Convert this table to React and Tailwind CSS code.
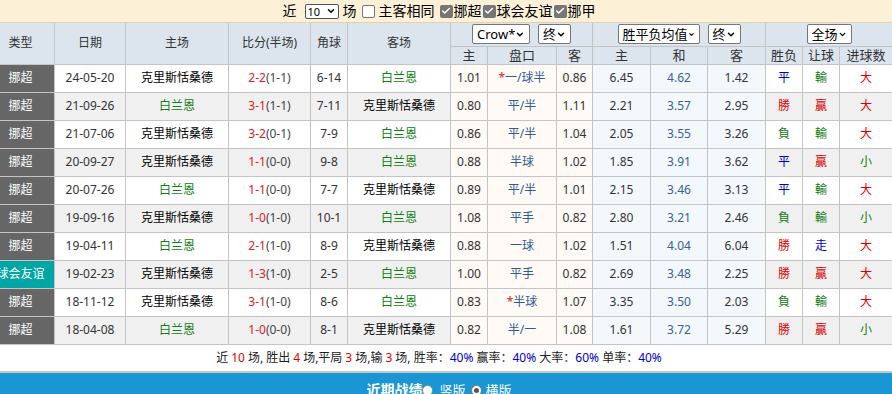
import { ChevronDown, Check } from 'lucide-react'

const ROWS = [
  ['挪超', '24-05-20', 'K', '2-2', '(1-1)', '6-14', '1.01', '*', '一/球半', '0.86', '6.45', '4.62', '1.42', '平', '輸', '大'],
  ['挪超', '21-09-26', 'B', '3-1', '(1-1)', '7-11', '0.80', '', '平/半', '1.11', '2.21', '3.57', '2.95', '勝', '贏', '大'],
  ['挪超', '21-07-06', 'K', '3-2', '(0-1)', '7-9', '0.86', '', '平/半', '1.04', '2.05', '3.55', '3.26', '負', '輸', '大'],
  ['挪超', '20-09-27', 'K', '1-1', '(0-0)', '9-8', '0.88', '', '半球', '1.02', '1.85', '3.91', '3.62', '平', '贏', '小'],
  ['挪超', '20-07-26', 'B', '1-1', '(0-0)', '7-7', '0.89', '', '平/半', '1.01', '2.15', '3.46', '3.13', '平', '輸', '大'],
  ['挪超', '19-09-16', 'K', '1-0', '(1-0)', '10-1', '1.08', '', '平手', '0.82', '2.80', '3.21', '2.46', '負', '輸', '小'],
  ['挪超', '19-04-11', 'B', '2-1', '(1-0)', '8-9', '0.88', '', '一球', '1.02', '1.51', '4.04', '6.04', '勝', '走', '大'],
  ['球会友谊', '19-02-23', 'K', '1-3', '(1-0)', '2-5', '1.00', '', '平手', '0.82', '2.69', '3.48', '2.25', '勝', '贏', '大'],
  ['挪超', '18-11-12', 'K', '3-1', '(1-0)', '8-6', '0.83', '*', '半球', '1.07', '3.35', '3.50', '2.03', '負', '輸', '大'],
  ['挪超', '18-04-08', 'B', '1-0', '(0-0)', '8-1', '0.82', '', '半/一', '1.08', '1.61', '3.72', '5.29', '勝', '贏', '小'],
]

const WIDTHS = [68, 71, 103, 82, 37, 103, 37, 69, 36, 58, 57, 58, 37, 37, 53]

const RESULT_COLOR = {
  平: 'text-[#0000cc]',
  走: 'text-[#0000cc]',
  勝: 'text-[#dd0000]',
  贏: 'text-[#dd0000]',
  大: 'text-[#dd0000]',
  負: 'text-[#108010]',
  輸: 'text-[#108010]',
  小: 'text-[#108010]',
}

function Box({ checked }) {
  return checked ? (
    <span className="inline-flex items-center justify-center w-[13px] h-[13px] rounded-[2px] bg-[#767676] text-white">
      <Check size={10} strokeWidth={3.5} />
    </span>
  ) : (
    <span className="inline-block w-[13px] h-[13px] rounded-[2px] border border-[#767676] bg-white" />
  )
}

function Sel({ label, w }) {
  return (
    <span className={`inline-flex items-center justify-between h-[20px] px-[4px] rounded-[2px] border border-[#767676] bg-white text-[13px] text-black ${w}`}>
      <span>{label}</span>
      <ChevronDown size={11} strokeWidth={3.5} />
    </span>
  )
}

function Team({ b }) {
  return b ? <span className="text-[#108010]">白兰恩</span> : <span className="text-black">克里斯恬桑德</span>
}

export default function App() {
  const td = 'border border-[#c4c4c4] p-0 text-center whitespace-nowrap overflow-hidden'
  const th = 'border border-[#c4c4c4] p-0 text-center font-normal whitespace-nowrap bg-[#dce5ee] text-[#333]'

  return (
    <div className="w-[892px] h-[394px] overflow-hidden bg-white font-['Noto_Sans','Noto_Sans_CJK_SC',sans-serif] text-[12px] text-[#333]">
      <div className="w-[906px] -ml-[14px]">
        {/* filter bar */}
        <div className="h-[23px] bg-[#fcf1d7] border-b border-[#e3d3ad] flex items-center justify-center text-[14px] text-black leading-none">
          <span>近</span>
          <span className="ml-[8px] inline-flex items-center justify-between w-[34px] h-[15px] px-[2px] border border-[#555] rounded-[2px] bg-white text-[11px]">
            10
            <ChevronDown size={10} strokeWidth={3.5} />
          </span>
          <span className="ml-[4px]">场</span>
          <span className="ml-[5px] mr-[4px] flex"><Box /></span>
          <span>主客相同</span>
          <span className="ml-[5px] mr-[1px] flex"><Box checked /></span>
          <span>挪超</span>
          <span className="mx-[1px] flex"><Box checked /></span>
          <span>球会友谊</span>
          <span className="mx-[1px] flex"><Box checked /></span>
          <span>挪甲</span>
        </div>

        <table className="table-fixed border-collapse w-[906px]">
          <colgroup>
            {WIDTHS.map((w, i) => (
              <col key={i} style={{ width: w }} />
            ))}
          </colgroup>
          <thead>
            <tr className="h-[23px]">
              <th rowSpan={2} className={`${th} border-t-0`}>类型</th>
              <th rowSpan={2} className={`${th} border-t-0`}>日期</th>
              <th rowSpan={2} className={`${th} border-t-0`}>主场</th>
              <th rowSpan={2} className={`${th} border-t-0`}>比分(半场)</th>
              <th rowSpan={2} className={`${th} border-t-0`}>角球</th>
              <th rowSpan={2} className={`${th} border-t-0`}>客场</th>
              <th colSpan={3} className={`${th} border-t-0`}>
                <div className="flex items-center justify-center gap-[8px]">
                  <Sel label="Crow*" w="w-[58px]" />
                  <Sel label="终" w="w-[33px]" />
                </div>
              </th>
              <th colSpan={3} className={`${th} border-t-0`}>
                <div className="flex items-center justify-center gap-[8px]">
                  <Sel label="胜平负均值" w="w-[82px]" />
                  <Sel label="终" w="w-[33px]" />
                </div>
              </th>
              <th colSpan={3} className={`${th} border-t-0`}>
                <div className="flex items-center justify-center">
                  <Sel label="全场" w="w-[45px]" />
                </div>
              </th>
            </tr>
            <tr className="h-[18px] text-[13px]">
              {['主', '盘口', '客', '主', '和', '客', '胜负', '让球', '进球数'].map((t, i) => (
                <th key={i} className={`${th} leading-[16px]`}>{t}</th>
              ))}
            </tr>
          </thead>
          <tbody>
            {ROWS.map((r, i) => (
              <tr key={i} className={`h-[28px] ${i % 2 ? 'bg-[#f0f0f0]' : 'bg-white'}`}>
                <td className={`${td} text-white ${r[0] === '球会友谊' ? 'bg-[#00a6a6]' : 'bg-[#666666]'}`}>{r[0]}</td>
                <td className={td}>{r[1]}</td>
                <td className={td}><Team b={r[2] === 'B'} /></td>
                <td className={td}>
                  <span className="text-[#e02020]">{r[3]}</span>
                  <span className="text-[#444]">{r[4]}</span>
                </td>
                <td className={td}>{r[5]}</td>
                <td className={td}><Team b={r[2] !== 'B'} /></td>
                <td className={`${td} bg-[#fffaf6]`}>{r[6]}</td>
                <td className={`${td} bg-[#fffaf6] text-[#2f5c94]`}>
                  {r[7] && <span className="text-[#e02020]">*</span>}
                  {r[8]}
                </td>
                <td className={`${td} bg-[#fffaf6]`}>{r[9]}</td>
                <td className={`${td} bg-[#f3f8fc]`}>{r[10]}</td>
                <td className={`${td} bg-[#f3f8fc] text-[#3a6096]`}>{r[11]}</td>
                <td className={`${td} bg-[#f3f8fc]`}>{r[12]}</td>
                <td className={`${td} ${RESULT_COLOR[r[13]]}`}>{r[13]}</td>
                <td className={`${td} ${RESULT_COLOR[r[14]]}`}>{r[14]}</td>
                <td className={`${td} ${RESULT_COLOR[r[15]]}`}>{r[15]}</td>
              </tr>
            ))}
          </tbody>
        </table>

        {/* summary */}
        <div className="h-[28px] flex items-center justify-center text-[12px] text-[#222] bg-white border-b-2 border-[#c8c8c8]">
          近 <span className="text-[#e00000] mx-[3px]">10</span>场, 胜出 <span className="text-[#e00000] mx-[3px]">4</span>场,平局 <span className="text-[#e00000] mx-[3px]">3</span>场,输 <span className="text-[#e00000] mx-[3px]">3</span>场, 胜率：<span className="text-[#0000cc]">40%</span>&nbsp;赢率：<span className="text-[#0000cc]">40%</span>&nbsp;大率：<span className="text-[#0000cc]">60%</span>&nbsp;单率：<span className="text-[#0000cc]">40%</span>
        </div>

        {/* bottom tab bar */}
        <div className="h-[40px] bg-[#1b96d4] flex items-start justify-center pt-[7px] text-white text-[13px] leading-[20px]">
          <span className="font-bold text-[14px]">近期战绩</span>
          <span className="mt-[5px] w-[11px] h-[11px] rounded-full bg-white border border-[#888]" />
          <span className="ml-[6px]">竖版</span>
          <span className="ml-[5px] mt-[5px] w-[11px] h-[11px] rounded-full bg-white border border-[#777] flex items-center justify-center">
            <span className="w-[5px] h-[5px] rounded-full bg-[#555]" />
          </span>
          <span className="ml-[4px]">横版</span>
        </div>
      </div>
    </div>
  )
}
